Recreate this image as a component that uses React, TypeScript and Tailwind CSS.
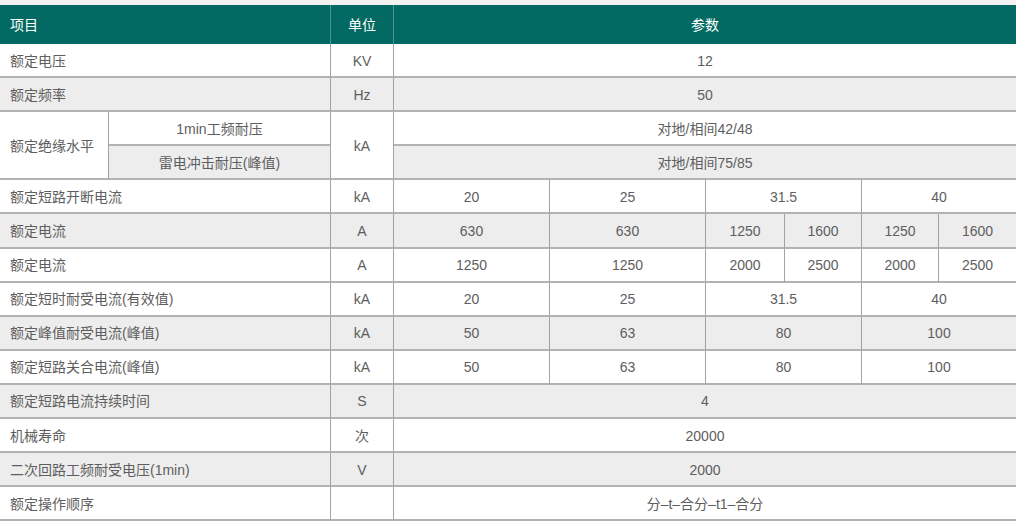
import React from "react";

type CellProps = {
  children?: React.ReactNode;
  className?: string;
};

// one table cell: right + bottom border, content centered
function Cell({ children, className = "" }: CellProps) {
  return (
    <div
      className={
        "flex h-full items-center justify-center pt-[2px] border-r border-b-2 border-r-[#a3a3a3] border-b-[#b3b3b3] " +
        className
      }
    >
      {children}
    </div>
  );
}

const G = "bg-[#ededed]";

export default function App() {
  return (
    <div
      className="w-[1016px] h-[532px] bg-white text-[14px] text-[#5e5e5e]"
      style={{ fontFamily: '"Liberation Sans", "Noto Sans CJK SC", sans-serif' }}
    >
      <div className="h-[5px] bg-[#f2f2f2]" />
      <div className="grid grid-cols-[109px_222px_63px_156px_156px_79px_77px_77px_77px] grid-rows-[39px_repeat(14,34.1px)] bg-[#f3f3f3]">
        {/* header */}
        <div className="col-span-2 flex items-center bg-[#036a63] pl-[10px] pt-[2px] text-white border-r border-[#4e948f]">
          项目
        </div>
        <div className="flex items-center justify-center bg-[#036a63] pt-[2px] text-white border-r border-[#4e948f]">
          单位
        </div>
        <div className="col-span-6 flex items-center justify-center bg-[#036a63] pt-[2px] text-white">
          参数
        </div>

        {/* 额定电压 */}
        <Cell className="col-span-2 justify-start pl-[10px] bg-white">额定电压</Cell>
        <Cell className="bg-white">KV</Cell>
        <Cell className="col-span-6 bg-white border-r-0">12</Cell>

        {/* 额定频率 */}
        <Cell className={"col-span-2 justify-start pl-[10px] " + G}>额定频率</Cell>
        <Cell className={G}>Hz</Cell>
        <Cell className={"col-span-6 border-r-0 " + G}>50</Cell>

        {/* 额定绝缘水平 */}
        <Cell className="row-span-2 justify-start pl-[10px] bg-white">额定绝缘水平</Cell>
        <Cell className="bg-white">1min工频耐压</Cell>
        <Cell className="row-span-2 bg-white">kA</Cell>
        <Cell className="col-span-6 bg-white border-r-0">对地/相间42/48</Cell>
        <Cell className={G}>雷电冲击耐压(峰值)</Cell>
        <Cell className={"col-span-6 border-r-0 " + G}>对地/相间75/85</Cell>

        {/* 额定短路开断电流 */}
        <Cell className="col-span-2 justify-start pl-[10px] bg-white">额定短路开断电流</Cell>
        <Cell className="bg-white">kA</Cell>
        <Cell className="bg-white">20</Cell>
        <Cell className="bg-white">25</Cell>
        <Cell className="col-span-2 bg-white">31.5</Cell>
        <Cell className="col-span-2 bg-white border-r-0">40</Cell>

        {/* 额定电流 630 */}
        <Cell className={"col-span-2 justify-start pl-[10px] " + G}>额定电流</Cell>
        <Cell className={G}>A</Cell>
        <Cell className={G}>630</Cell>
        <Cell className={G}>630</Cell>
        <Cell className={G}>1250</Cell>
        <Cell className={G}>1600</Cell>
        <Cell className={G}>1250</Cell>
        <Cell className={"border-r-0 " + G}>1600</Cell>

        {/* 额定电流 1250 */}
        <Cell className="col-span-2 justify-start pl-[10px] bg-white">额定电流</Cell>
        <Cell className="bg-white">A</Cell>
        <Cell className="bg-white">1250</Cell>
        <Cell className="bg-white">1250</Cell>
        <Cell className="bg-white">2000</Cell>
        <Cell className="bg-white">2500</Cell>
        <Cell className="bg-white">2000</Cell>
        <Cell className="bg-white border-r-0">2500</Cell>

        {/* 额定短时耐受电流 */}
        <Cell className="col-span-2 justify-start pl-[10px] bg-white">额定短时耐受电流(有效值)</Cell>
        <Cell className="bg-white">kA</Cell>
        <Cell className="bg-white">20</Cell>
        <Cell className="bg-white">25</Cell>
        <Cell className="col-span-2 bg-white">31.5</Cell>
        <Cell className="col-span-2 bg-white border-r-0">40</Cell>

        {/* 额定峰值耐受电流 */}
        <Cell className={"col-span-2 justify-start pl-[10px] " + G}>额定峰值耐受电流(峰值)</Cell>
        <Cell className={G}>kA</Cell>
        <Cell className={G}>50</Cell>
        <Cell className={G}>63</Cell>
        <Cell className={"col-span-2 " + G}>80</Cell>
        <Cell className={"col-span-2 border-r-0 " + G}>100</Cell>

        {/* 额定短路关合电流 */}
        <Cell className="col-span-2 justify-start pl-[10px] bg-white">额定短路关合电流(峰值)</Cell>
        <Cell className="bg-white">kA</Cell>
        <Cell className="bg-white">50</Cell>
        <Cell className="bg-white">63</Cell>
        <Cell className="col-span-2 bg-white">80</Cell>
        <Cell className="col-span-2 bg-white border-r-0">100</Cell>

        {/* 持续时间 */}
        <Cell className={"col-span-2 justify-start pl-[10px] " + G}>额定短路电流持续时间</Cell>
        <Cell className={G}>S</Cell>
        <Cell className={"col-span-6 border-r-0 " + G}>4</Cell>

        {/* 机械寿命 */}
        <Cell className="col-span-2 justify-start pl-[10px] bg-white">机械寿命</Cell>
        <Cell className="bg-white">次</Cell>
        <Cell className="col-span-6 bg-white border-r-0">20000</Cell>

        {/* 二次回路 */}
        <Cell className={"col-span-2 justify-start pl-[10px] " + G}>二次回路工频耐受电压(1min)</Cell>
        <Cell className={G}>V</Cell>
        <Cell className={"col-span-6 border-r-0 " + G}>2000</Cell>

        {/* 操作顺序 */}
        <Cell className="col-span-2 justify-start pl-[10px] bg-white">额定操作顺序</Cell>
        <Cell className="bg-white"></Cell>
        <Cell className="col-span-6 bg-white border-r-0">分–t–合分–t1–合分</Cell>
      </div>
    </div>
  );
}
